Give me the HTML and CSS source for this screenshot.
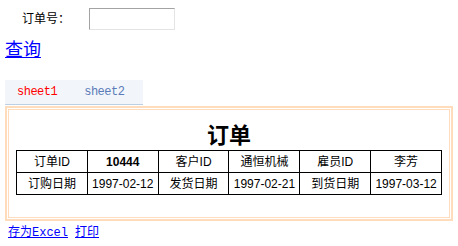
FILE: index.html
```html
<!DOCTYPE html>
<html lang="zh">
<head>
<meta charset="utf-8">
<title>订单</title>
<link rel="stylesheet" href="styles.css">
</head>
<body>
<div class="search">
  <span class="label">订单号：</span>
  <input class="order-input" type="text">
</div>
<div class="query-row"><a class="query" href="#">查询</a></div>
<div class="tabs">
  <span class="tab tab-active">sheet1</span>
  <span class="tab">sheet2</span>
</div>
<div class="frame">
  <div class="frame-inner">
    <h1 class="title">订单</h1>
    <table class="report">
      <tr>
        <td>订单ID</td>
        <td class="strong">10444</td>
        <td>客户ID</td>
        <td>通恒机械</td>
        <td>雇员ID</td>
        <td>李芳</td>
      </tr>
      <tr>
        <td>订购日期</td>
        <td>1997-02-12</td>
        <td>发货日期</td>
        <td>1997-02-21</td>
        <td>到货日期</td>
        <td>1997-03-12</td>
      </tr>
    </table>
  </div>
</div>
<div class="actions">
  <a class="action" href="#">存为Excel</a>
  <a class="action" href="#">打印</a>
</div>
</body>
</html>
```
FILE: styles.css
```css
body {
  margin: 0;
  padding: 8px 5px 0;
  font-family: "Liberation Sans", "Noto Sans CJK SC", sans-serif;
  font-size: 12px;
  color: #000;
  background: #fff;
}

.search {
  display: flex;
  align-items: center;
  gap: 19px;
  padding-left: 17px;
  height: 22px;
}

.label {
  font-family: "Noto Sans CJK SC", sans-serif;
  font-size: 12px;
  line-height: 14px;
  margin-top: -3px;
}

.order-input {
  box-sizing: border-box;
  width: 86px;
  height: 22px;
  margin: 0;
  padding: 0;
  border: 1px solid;
  border-color: #a3a3a3 #e4e4e4 #e4e4e4 #a3a3a3;
  background: #fff;
}

.query-row {
  margin-top: 8px;
  height: 21px;
}

.query {
  font-family: "Noto Sans CJK SC", sans-serif;
  font-size: 18px;
  line-height: 21px;
  color: #0000ff;
}

.tabs {
  box-sizing: border-box;
  width: 138px;
  height: 25px;
  margin-top: 21px;
  display: flex;
  align-items: center;
  gap: 27px;
  padding-left: 12px;
  background: #f2f6fb;
  border-bottom: 1px solid #bccfe3;
  font-family: "Liberation Mono", monospace;
  font-size: 12px;
  letter-spacing: -0.5px;
}

.tab {
  color: #5b7bb8;
}

.tab-active {
  color: #ff0000;
}

.frame {
  margin-top: 1px;
  border: 2px solid #fedcbc;
  padding: 1px;
}

.frame-inner {
  border: 1px solid #fedcbc;
  padding: 10px 7px 22px;
}

.title {
  margin: 0 0 4px;
  text-align: center;
  font-family: "Noto Sans CJK SC", serif;
  font-size: 22px;
  line-height: 26px;
  font-weight: bold;
}

.report {
  width: 100%;
  table-layout: fixed;
  border-collapse: collapse;
}

.report td {
  border: 1px solid #000;
  height: 21px;
  padding: 0;
  text-align: center;
  vertical-align: middle;
  font-size: 12px;
  line-height: 14px;
}

.report .strong {
  font-weight: bold;
}

.actions {
  display: flex;
  gap: 7px;
  padding-left: 3px;
  margin-top: 5px;
}

.action {
  font-family: "Liberation Mono", "Noto Sans CJK SC", monospace;
  font-size: 12px;
  line-height: 14px;
  color: #0000ff;
}
```
